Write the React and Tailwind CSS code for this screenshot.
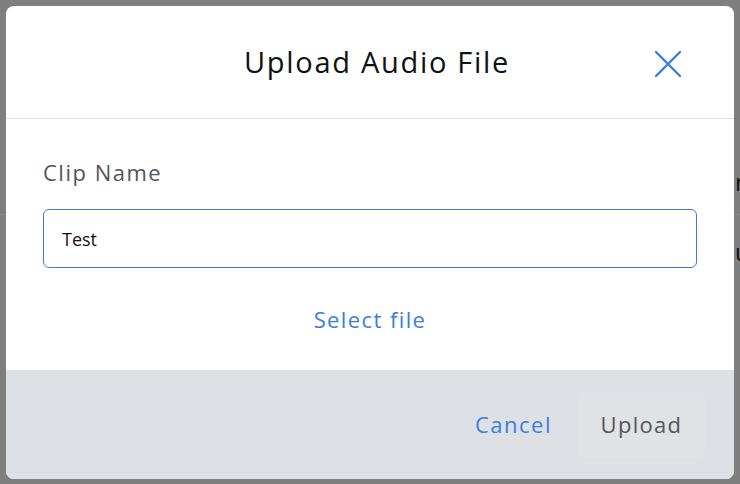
import { useState } from "react";

function CloseIcon() {
  return (
    <svg width="28" height="28" viewBox="0 0 28 28" fill="none">
      <path d="M2 2L26 26M26 2L2 26" stroke="#3b7ddd" strokeWidth="2.4" strokeLinecap="round" />
    </svg>
  );
}

export default function App() {
  const [clipName, setClipName] = useState("Test");

  return (
    <div
      className="relative w-[740px] h-[484px] bg-[#7f7f7f] overflow-hidden"
      style={{ fontFamily: "'Open Sans', Lato, sans-serif" }}
    >
      {/* page behind the overlay */}
      <div className="absolute left-0 top-0 w-full h-full">
        <div className="absolute left-0 top-[214px] w-full h-px bg-[#888888]" />
        <div className="absolute left-[735px] top-[164px] text-[24px] text-[#111]">n</div>
        <div className="absolute left-[735px] top-[234px] text-[24px] text-[#111]">u</div>
      </div>

      <div className="relative pt-[6px] px-[6px]">
        <div className="w-[728px] h-[473px] bg-white rounded-[8px] overflow-hidden flex flex-col">
          <div className="h-[113px] shrink-0 border-b border-[#dde1e5] flex items-center justify-center relative">
            <h2 className="text-[29px] text-[#111] tracking-[1.7px] pl-[14px]">Upload Audio File</h2>
            <button className="absolute right-[52px] top-[44px]">
              <CloseIcon />
            </button>
          </div>

          <div className="flex-1 px-[37px] pt-[38px]">
            <label className="block text-[22px] text-[#555] tracking-[1.5px] leading-[30px]">Clip Name</label>
            <input
              autoFocus
              value={clipName}
              onChange={(e) => setClipName(e.target.value)}
              className="mt-[22px] w-[654px] h-[59px] border border-[#3b7ddd] rounded-[6px] px-[18px] text-[18px] text-[#111] caret-black outline-none"
            />
            <div className="mt-[36px] text-center text-[22px] text-[#3b7ddd] tracking-[1.4px] leading-[30px]">
              Select file
            </div>
          </div>

          <div className="h-[109px] shrink-0 bg-[#dde1e5] flex items-center justify-end pr-[29px]">
            <button className="text-[22px] text-[#3b7ddd] tracking-[1.5px]">Cancel</button>
            <button className="ml-[26px] w-[127px] h-[66px] rounded-[6px] bg-[#e0e3e6] text-[22px] text-[#555] tracking-[1.3px]">
              Upload
            </button>
          </div>
        </div>
      </div>
    </div>
  );
}
